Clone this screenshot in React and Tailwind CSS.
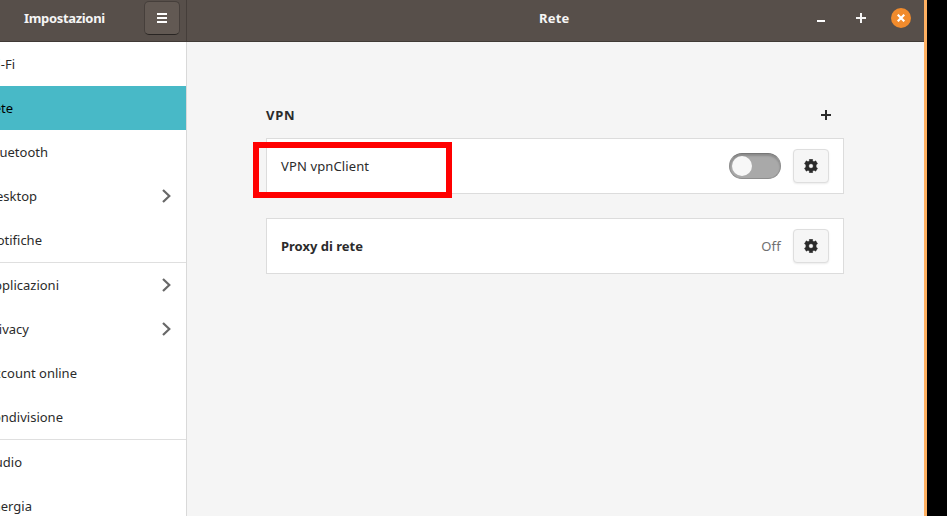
import React from "react";

const groups = [
  [
    { label: "i-Fi", width: "w-[15px]" },
    { label: "ete", width: "w-[13px]", active: true },
    { label: "uetooth", width: "w-[48px]" },
    { label: "esktop", width: "w-[37px]", arrow: true },
    { label: "otifiche", width: "w-[42px]" },
  ],
  [
    { label: "pplicazioni", width: "w-[59px]", arrow: true },
    { label: "rivacy", width: "w-[29px]", arrow: true },
    { label: "ccount online", width: "w-[77px]" },
    { label: "ondivisione", width: "w-[63px]" },
  ],
  [
    { label: "udio", width: "w-[22px]" },
    { label: "nergia", width: "w-[32px]" },
  ],
];

function Chevron() {
  return (
    <svg className="mr-[13px] shrink-0" width="12" height="16" viewBox="0 0 12 16" fill="none" stroke="#686868" strokeWidth="2.2">
      <path d="M2 2 L8.3 8 L2 14" />
    </svg>
  );
}

function Plus({ className }) {
  return (
    <svg className={className} width="10" height="10" viewBox="0 0 10 10" fill="currentColor">
      <path d="M4 0h2v4h4v2H6v4H4V6H0V4h4z" />
    </svg>
  );
}

function Gear() {
  return (
    <svg width="14" height="14" viewBox="0 0 14 14" fill="#2b2b2b" stroke="#2b2b2b" strokeWidth="0.5" strokeLinejoin="round">
      <path
        fillRule="evenodd"
        d="M5.4.25h3.2v1.7l1.4.8 1.7-.9 1.8 2.9-1.4 1v2.5l1.4 1-1.8 2.9-1.7-.9-1.4.8v1.7H5.4v-1.7l-1.4-.8-1.7.9-1.8-2.9 1.4-1v-2.5l-1.4-1 1.8-2.9 1.7.9 1.4-.8zM7 4.7a2.3 2.3 0 1 0 0 4.6 2.3 2.3 0 0 0 0-4.6z"
      />
    </svg>
  );
}

function GearButton() {
  return (
    <button className="flex h-[34px] w-9 items-center justify-center rounded-[4px] border border-[#dedede] bg-[#f6f6f6] shadow-[0_1px_2px_rgba(0,0,0,0.08)]">
      <Gear />
    </button>
  );
}

export default function App() {
  return (
    <div className="flex h-[516px] w-[947px] overflow-hidden bg-black font-['Noto_Sans','Open_Sans',sans-serif] text-[13px] leading-5 text-[#2b2b2b]">
      <div className="flex w-[924px] shrink-0 flex-col bg-[#f5f5f5]">
        <header className="flex h-[42px] shrink-0 border-b border-[#403a36] bg-[#574f4a] font-bold text-[#f5f5f5]">
          <div className="flex w-[187px] items-start border-r border-[#453e3a]">
            <span className="mt-2 ml-6 w-[120px] whitespace-nowrap tracking-[-0.33px]">Impostazioni</span>
            <button className="mt-px flex h-[34px] w-9 shrink-0 items-center justify-center rounded-[5px] border border-[#463f3b] border-b-[#292523] bg-[#625953]">
              <svg width="10" height="10" viewBox="0 0 10 10" fill="#fff">
                <path d="M0 0h10v2H0zM0 4h10v2H0zM0 8h10v2H0z" />
              </svg>
            </button>
          </div>
          <div className="flex flex-1 items-start">
            <span className="mt-2 ml-[352px] w-[278px] tracking-[0.2px]">Rete</span>
            <span className="mt-5 h-[2px] w-2 bg-white" />
            <Plus className="mt-[13px] ml-[31px] h-[10px] w-[10px]" />
            <span className="mt-2 ml-[25px] flex h-5 w-5 items-center justify-center rounded-full bg-[#f18b2c]">
              <svg width="8" height="8" viewBox="0 0 8 8" fill="none" stroke="#fff" strokeWidth="2.2">
                <path d="M.7.7l6.6 6.6M7.3.7L.7 7.3" />
              </svg>
            </span>
          </div>
        </header>
        <div className="flex min-h-0 flex-1">
          <nav className="w-[187px] shrink-0 overflow-hidden border-r border-[#d9d9d9] bg-white">
            {groups.map((items, g) => (
              <div key={g} className={g < 2 ? "border-b border-[#dfdfdf]" : ""}>
                {items.map((item) => (
                  <div
                    key={item.label}
                    className={`flex h-11 items-center justify-between ${item.active ? "bg-[#48b9c7] text-black" : ""}`}
                  >
                    <span className={`flex shrink-0 justify-end whitespace-nowrap ${item.width}`}>{item.label}</span>
                    {item.arrow && <Chevron />}
                  </div>
                ))}
              </div>
            ))}
          </nav>
          <main className="flex-1 pt-[63px] pr-20 pl-[79px]">
            <div className="flex h-[33px] items-start justify-between">
              <h2 className="font-bold tracking-[0.7px]">VPN</h2>
              <Plus className="mt-[5px] mr-[13px]" />
            </div>
            <section className="relative flex h-14 items-center border border-[#dcdcdc] bg-white pr-[14px] pl-[14px]">
              <span className="flex-1 tracking-[0.12px]">VPN vpnClient</span>
              <span className="mr-3 flex h-[26px] w-[52px] items-center rounded-full border border-[#8d8d8d] border-t-[#777] bg-[#a9a9a9] pl-[2px] shadow-[inset_0_2px_2px_rgba(0,0,0,0.18)]">
                <span className="h-5 w-5 rounded-full bg-[#f7f7f7]" />
              </span>
              <GearButton />
              <div className="absolute top-[3px] left-[-14px] h-14 w-[199px] border-[6px] border-[#ff0000]" />
            </section>
            <section className="mt-6 flex h-14 items-center border border-[#dcdcdc] bg-white pr-[14px] pl-[14px]">
              <span className="flex-1 font-bold">Proxy di rete</span>
              <span className="mr-3 tracking-[0.25px] text-[#707070]">Off</span>
              <GearButton />
            </section>
          </main>
        </div>
      </div>
      <div className="w-[3px] shrink-0 bg-[#ffb061]" />
    </div>
  );
}
